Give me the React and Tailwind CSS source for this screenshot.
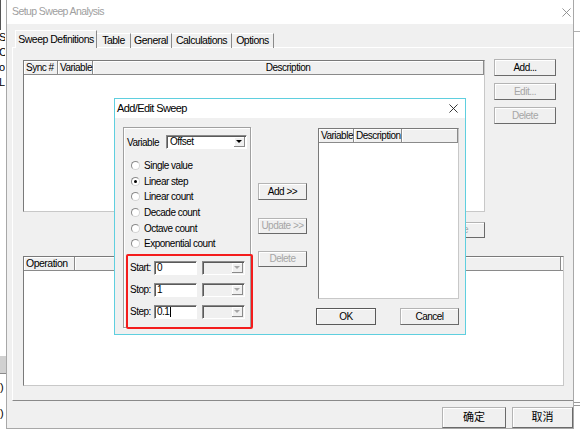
function CloseX({ size, color }) {
  return (
    <svg width={size} height={size} viewBox="0 0 10 10" className="shrink-0">
      <path d="M0.5 0.5 L9.5 9.5 M9.5 0.5 L0.5 9.5" stroke={color} strokeWidth="1" fill="none" />
    </svg>
  );
}

function Btn({ children, disabled, def, className = "" }) {
  return (
    <div
      className={`flex items-center justify-center whitespace-nowrap bg-[#f0f0f0] border shadow-[inset_1px_1px_0_#ffffff] leading-none ${
        def
          ? "border-[#5a5a5a]"
          : "border-[#b4b4b4] border-r-[#6a6a6a] border-b-[#6a6a6a]"
      } ${disabled ? "text-[#a6a6a6]" : "text-black"} ${className}`}
    >
      {children}
    </div>
  );
}

function HeadCell({ children, className = "" }) {
  return (
    <div
      className={`flex h-full items-center whitespace-nowrap border-r border-[#8a8a8a] bg-[#f0f0f0] px-[2px] shadow-[inset_1px_1px_0_#ffffff] ${className}`}
    >
      {children}
    </div>
  );
}

function ListBox({ className = "", children }) {
  return (
    <div
      className={`flex flex-col border border-[#7a7a7a] border-r-[#c8c8c8] border-b-[#c8c8c8] bg-white ${className}`}
    >
      <div className="flex h-[14px] border-b border-[#8a8a8a]">{children}</div>
    </div>
  );
}

function Radio({ label, checked }) {
  return (
    <div className="flex h-[15.6px] items-center pl-[7px]">
      <span className="flex h-[9px] w-[9px] items-center justify-center rounded-full border border-[#8a8a8a] border-r-[#d4d4d4] border-b-[#d4d4d4] bg-white">
        {checked && <span className="h-[3px] w-[3px] rounded-full bg-black" />}
      </span>
      <span className="ml-[4px] whitespace-nowrap">{label}</span>
    </div>
  );
}

function Combo({ value, disabled, className = "" }) {
  return (
    <div
      className={`flex h-[14px] border border-[#8a8a8a] border-r-white border-b-white shadow-[inset_1px_1px_0_#5a5a5a] ${
        disabled ? "bg-[#f0f0f0]" : "bg-white"
      } ${className}`}
    >
      <div className="flex-1 pl-[3px] leading-[12px]">{value}</div>
      <div className="my-[1px] mr-[1px] flex w-[11px] items-center justify-center border-r border-b border-[#8a8a8a] bg-[#f0f0f0] shadow-[inset_1px_1px_0_#ffffff]">
        <span
          className={`border-x-[3px] border-t-[3px] border-x-transparent ${
            disabled ? "border-t-[#a6a6a6]" : "border-t-black"
          }`}
        />
      </div>
    </div>
  );
}

function Field({ value, caret }) {
  return (
    <div className="flex h-[14px] w-[43px] items-center border border-[#8a8a8a] border-r-white border-b-white bg-white pl-[2px] leading-[12px] shadow-[inset_1px_1px_0_#5a5a5a]">
      {value}
      {caret && <span className="ml-[1px] h-[10px] w-px bg-black" />}
    </div>
  );
}

function SweepRow({ label, value, caret }) {
  return (
    <div className="flex h-[14px] items-center">
      <span className="w-[30px] pl-[6px]">{label}</span>
      <Field value={value} caret={caret} />
      <Combo disabled className="ml-[5px] w-[43px]" />
    </div>
  );
}

function AddEditSweep() {
  return (
    <div className="absolute left-[114px] top-[98px] flex h-[237px] w-[352px] flex-col border border-[#5fcfdf] bg-[#f0f0f0]">
      <div className="flex h-[19px] items-center justify-between bg-white pl-[2px] pr-[7px] text-[11px] tracking-[-0.6px] text-black">
        <span>Add/Edit Sweep</span>
        <CloseX size={9} color="#222" />
      </div>

      <div className="flex flex-1 items-start">
        <div className="ml-[8px] mt-[9px] h-[201px] w-[128px] border border-[#a0a0a0] pt-[7px] shadow-[inset_1px_1px_0_#ffffff,1px_1px_0_#ffffff]">
          <div className="flex h-[14px] items-center">
            <span className="w-[42px] pl-[3px]">Variable</span>
            <Combo value="Offset" className="w-[81px]" />
          </div>

          <div className="mt-[9px]">
            <Radio label="Single value" />
            <Radio label="Linear step" checked />
            <Radio label="Linear count" />
            <Radio label="Decade count" />
            <Radio label="Octave count" />
            <Radio label="Exponential count" />
          </div>

          <div className="mt-[9px] flex flex-col gap-[8px]">
            <SweepRow label="Start:" value="0" />
            <SweepRow label="Stop:" value="1" />
            <SweepRow label="Step:" value="0.1" caret />
          </div>
        </div>

        <div className="ml-[7px] flex w-[49px] flex-col">
          <Btn className="mt-[65px] h-[17px]">Add &gt;&gt;</Btn>
          <Btn disabled className="mt-[18px] h-[16px]">
            Update &gt;&gt;
          </Btn>
          <Btn disabled className="mt-[17px] h-[16px]">
            Delete
          </Btn>
        </div>

        <div className="ml-[11px] flex w-[141px] flex-col">
          <ListBox className="mt-[10px] h-[171px]">
            <HeadCell className="w-[35px]">Variable</HeadCell>
            <HeadCell className="w-[48px]">Description</HeadCell>
            <HeadCell className="flex-1" />
          </ListBox>
          <div className="mt-[9px] flex justify-between">
            <Btn def className="-ml-[2px] h-[17px] w-[60px]">
              OK
            </Btn>
            <Btn className="h-[17px] w-[59px]">Cancel</Btn>
          </div>
        </div>
      </div>

      <div className="absolute left-[11px] top-[155px] h-[75px] w-[127px] rounded-[2px] border-2 border-[#f41c1c]" />
    </div>
  );
}

export default function App() {
  const tabs = [
    { label: "Table", w: "w-[34px]" },
    { label: "General", w: "w-[41px]" },
    { label: "Calculations", w: "w-[60px]" },
    { label: "Options", w: "w-[42px]" },
  ];

  return (
    <div className="relative flex h-[435px] w-[580px] overflow-hidden bg-white font-['Liberation_Sans','Noto_Sans_CJK_SC',sans-serif] text-[10px] tracking-[-0.5px] text-black">
      {/* what shows of the window behind, on the left */}
      <div className="flex w-[6px] shrink-0 flex-col overflow-hidden text-[11px] leading-[15px]">
        <div className="h-[30px] border-l border-[#555]" />
        <span className="-ml-px w-[6px] overflow-hidden">S</span>
        <span className="-ml-px w-[6px] overflow-hidden">C</span>
        <span className="-ml-px w-[6px] overflow-hidden">o</span>
        <span className="-ml-px w-[6px] overflow-hidden">L</span>
        <div className="mt-[266px] h-[17px] bg-[#d0d0d0]" />
        <div className="border-t border-[#8a8a8a]" />
        <span className="mt-[4px] leading-[18px]">)</span>
        <span className="mt-[8px] leading-[18px]">)</span>
      </div>

      {/* Setup Sweep Analysis */}
      <div className="flex h-[429px] w-[568px] shrink-0 flex-col border-x border-b border-[#a8a8a8] bg-[#f0f0f0]">
        <div className="flex h-[24px] items-center justify-between bg-white pl-[5px] pr-[2px] text-[10.5px] tracking-[-0.6px] text-[#a0a0a0]">
          <span>Setup Sweep Analysis</span>
          <CloseX size={9} color="#8a8a8a" />
        </div>

        <div className="relative z-10 -mb-px ml-[8px] mt-[6px] flex h-[18px] items-end text-[10.5px]">
          <div className="flex h-[18px] w-[82px] items-center justify-center whitespace-nowrap border-t border-l border-white border-r border-r-[#8a8a8a] bg-[#f0f0f0]">
            Sweep Definitions
          </div>
          {tabs.map((tab) => (
            <div
              key={tab.label}
              className={`flex h-[15px] items-center justify-center whitespace-nowrap border-t border-white border-r border-r-[#8a8a8a] ${tab.w}`}
            >
              {tab.label}
            </div>
          ))}
        </div>

        <div className="ml-[5px] h-[354px] border-t border-l border-white border-b border-b-[#8a8a8a] pl-[10px] pt-[12px]">
          <div className="flex items-start">
            <ListBox className="h-[152px] w-[462px]">
              <HeadCell className="w-[34px]">Sync #</HeadCell>
              <HeadCell className="w-[35px]">Variable</HeadCell>
              <HeadCell className="flex-1 justify-center">Description</HeadCell>
            </ListBox>
            <div className="-mt-px ml-[9px] flex w-[62px] flex-col gap-[7px]">
              <Btn className="h-[17px]">Add...</Btn>
              <Btn disabled className="h-[17px]">
                Edit...
              </Btn>
              <Btn disabled className="h-[17px]">
                Delete
              </Btn>
            </div>
          </div>

          <Btn disabled className="ml-[402px] mt-[10px] h-[16px] w-[60px]">
            Delete
          </Btn>

          <ListBox className="mt-[18px] h-[130px] w-[541px]">
            <HeadCell className="w-[51px] text-[10.5px]">Operation</HeadCell>
            <HeadCell className="flex-1" />
            <div className="w-[2px]" />
          </ListBox>
        </div>

        <div className="mt-[6px] flex justify-end gap-[6px] text-[11px] tracking-normal">
          <Btn className="h-[21px] w-[64px]">确定</Btn>
          <Btn className="h-[21px] w-[61px]">取消</Btn>
        </div>
      </div>

      {/* what shows of the window behind, on the right */}
      <div className="flex w-[6px] shrink-0 flex-col">
        <div className="mt-[31px] border-t border-[#b0b0b0]" />
        <div className="mt-[370px] border-t border-[#9a9a9a]" />
        <div className="mt-[2px] border-t border-[#9a9a9a]" />
      </div>

      <AddEditSweep />
    </div>
  );
}
